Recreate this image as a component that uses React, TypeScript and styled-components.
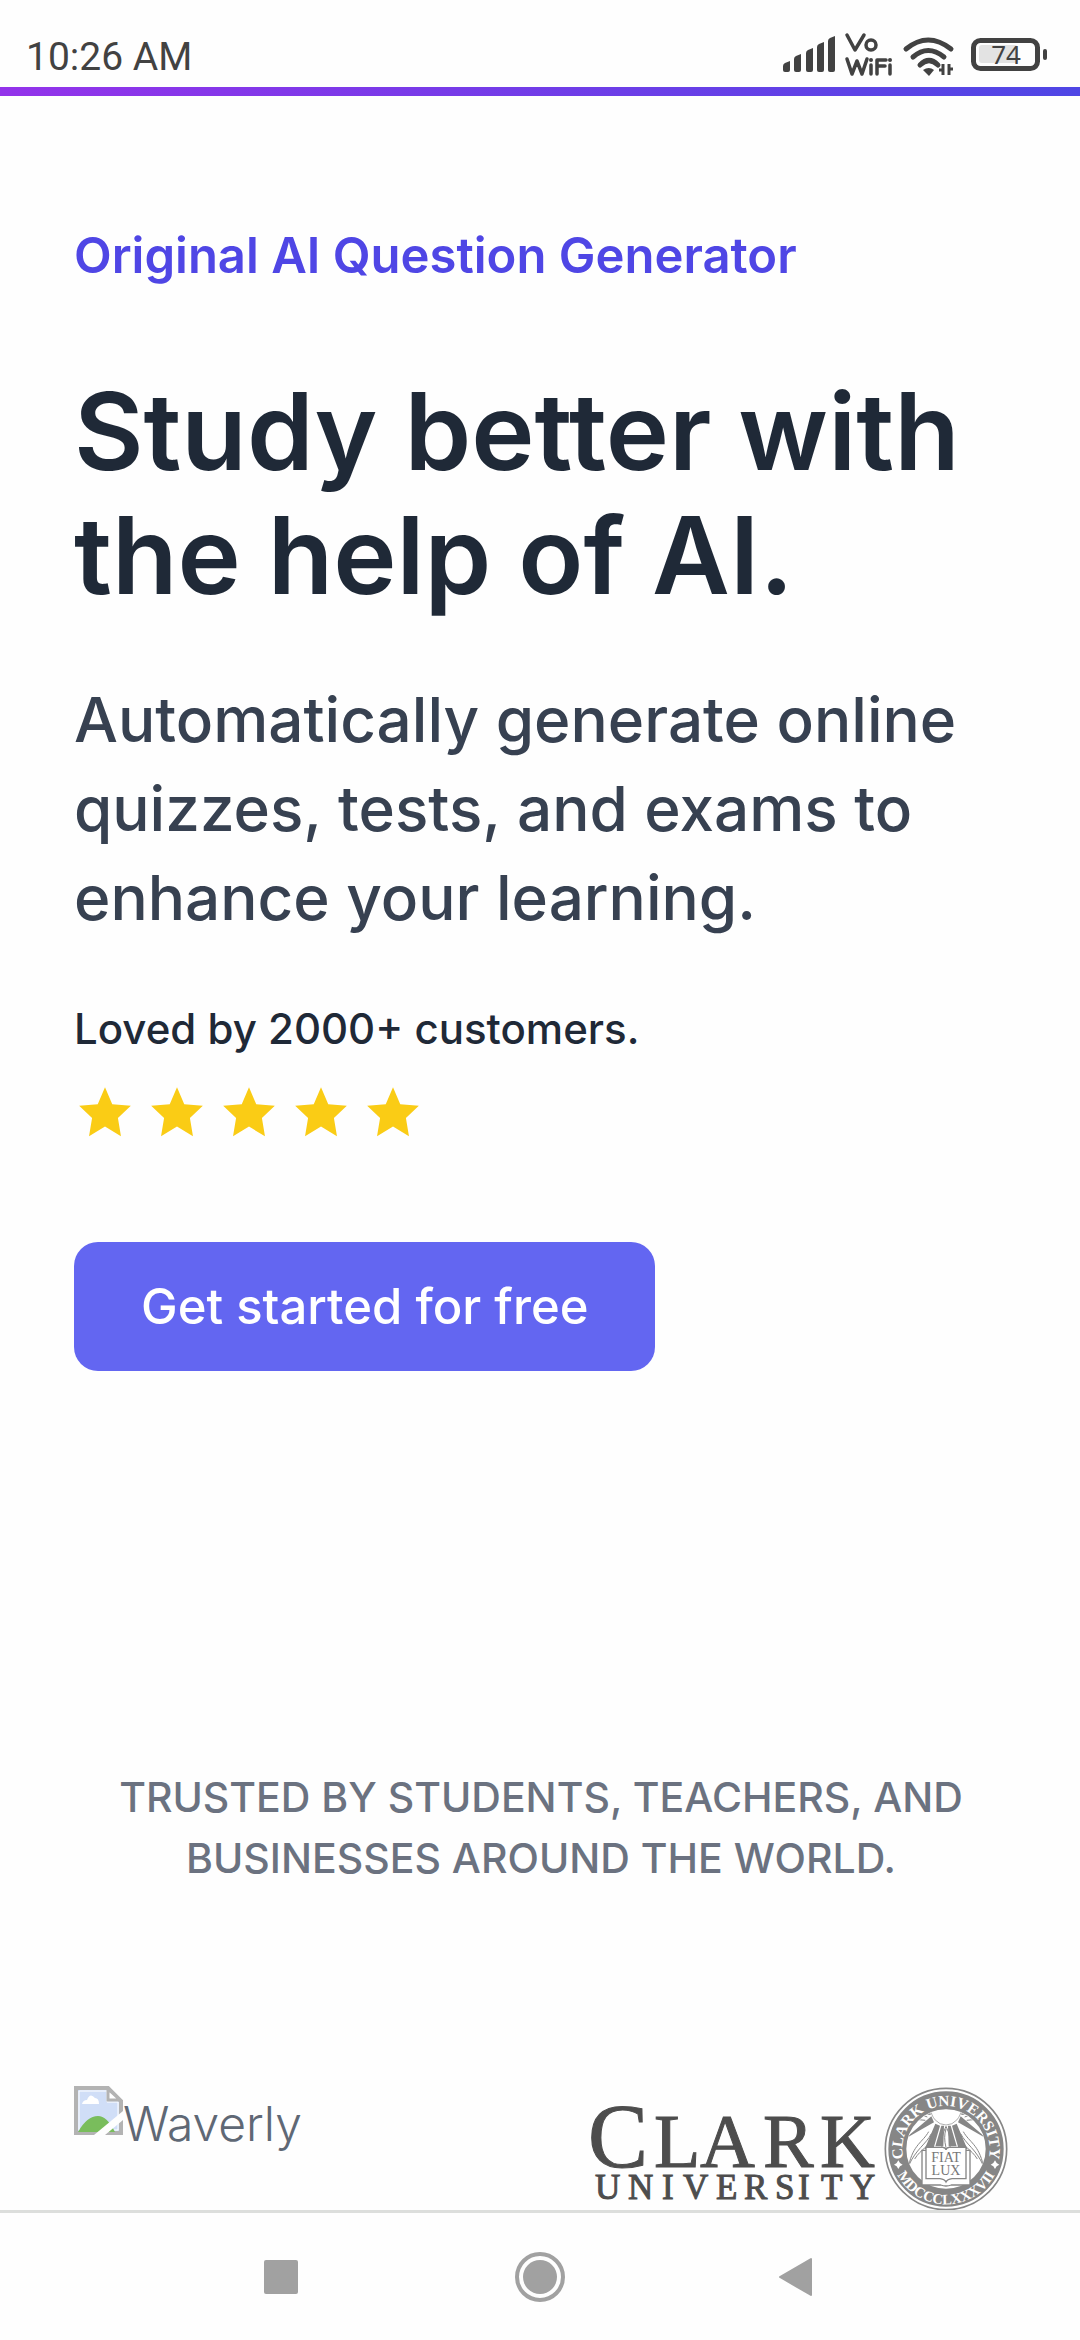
import React from "react";
import styled, { createGlobalStyle } from "styled-components";

const GlobalStyle = createGlobalStyle`
  *, *::before, *::after { box-sizing: border-box; }
  body {
    margin: 0;
    background: #fefefe;
    font-family: Inter, "Noto Sans", sans-serif;
  }
  h1, p { margin: 0; }
`;

const Screen = styled.div`
  display: flex;
  flex-direction: column;
  height: 100vh;
  overflow: hidden;
`;

const StatusBar = styled.header`
  display: flex;
  align-items: flex-end;
  justify-content: space-between;
  flex: none;
  height: 87px;
  padding: 0 31px 8px 26px;
  color: #424242;
  font-family: Roboto, sans-serif;
`;

const Clock = styled.time`
  font-size: 39px;
  line-height: 44px;
`;

const StatusIcons = styled.svg`
  display: block;
  width: 266px;
  height: 54px;
`;

const Accent = styled.div`
  flex: none;
  height: 9px;
  background: linear-gradient(90deg, #9333ea, #4f46e5);
`;

const Page = styled.main`
  flex: 1;
  min-height: 0;
  overflow: hidden;
  padding: 124px 72px 0 74px;
`;

const Hero = styled.section`
  display: flex;
  flex-direction: column;
  align-items: flex-start;
`;

const Eyebrow = styled.p`
  color: #4f46e5;
  font-size: 49px;
  font-weight: 600;
  line-height: 72px;
`;

const Title = styled.h1`
  margin-top: 77px;
  color: #1f2937;
  font-size: 107px;
  font-weight: 600;
  line-height: 124px;
`;

const Lead = styled.p`
  margin-top: 58px;
  color: #374151;
  font-size: 62px;
  font-weight: 500;
  line-height: 89px;
`;

const Loved = styled.p`
  margin-top: 57px;
  color: #1f2937;
  font-size: 42px;
  font-weight: 500;
  line-height: 60px;
`;

const Stars = styled.div`
  display: flex;
  gap: 10px;
  margin-top: 23px;
`;

const StarIcon = styled.svg`
  display: block;
  width: 62px;
  height: 62px;
  fill: #facc15;
`;

const StartButton = styled.button`
  margin-top: 98px;
  padding: 0 67px;
  height: 129px;
  border: 0;
  border-radius: 24px;
  background: #6366f1;
  color: #fff;
  font-family: inherit;
  font-size: 49px;
  font-weight: 500;
`;

const Trusted = styled.p`
  margin-top: 396px;
  color: #6b7280;
  font-size: 41px;
  font-weight: 500;
  line-height: 61px;
  text-align: center;
`;

const Logos = styled.section`
  display: flex;
  justify-content: space-between;
  align-items: flex-start;
  margin-top: 197px;
`;

const MissingLogo = styled.div`
  display: flex;
  color: #5f6875;
  font-size: 48px;
  font-weight: 300;
  line-height: 76px;
`;

const MissingIcon = styled.svg`
  display: block;
  width: 49px;
  height: 49px;
`;

const University = styled.div`
  display: flex;
  gap: 8px;
`;

const Wordmark = styled.svg`
  display: block;
  width: 288px;
  height: 126px;
  fill: #4d4d4d;
  stroke: #4d4d4d;
  stroke-width: 1;
  font-family: "Liberation Serif", serif;
`;

const Seal = styled.svg`
  display: block;
  width: 124px;
  height: 126px;
  font-family: "Liberation Serif", serif;
`;

const NavBar = styled.nav`
  display: flex;
  flex: none;
  align-items: center;
  justify-content: center;
  gap: 209px;
  height: 130px;
  border-top: 3px solid #dcdedc;
  background: #fefefe;
`;

const NavButton = styled.button`
  display: block;
  width: 50px;
  height: 50px;
  padding: 0;
  border: 0;
  background: none;
`;

const NavIcon = styled.svg`
  display: block;
  width: 50px;
  height: 50px;
  fill: #a1a1a1;
`;

function DeviceStatus() {
  return (
    <StatusIcons viewBox="0 0 266 54" role="img" aria-label="Signal, VoWiFi, Wi-Fi, battery 74">
      <g fill="#424242">
        <path d="M0 41q0-2 2-3l5-2v9q0 2-2 2H2q-2 0-2-2z" />
        <path d="M11 34q0-2 2-3l5-2v16q0 2-2 2h-3q-2 0-2-2z" />
        <path d="M23 28q0-2 2-3l5-2v22q0 2-2 2h-3q-2 0-2-2z" />
        <path d="M34 22q0-2 2-3l5-2v28q0 2-2 2h-3q-2 0-2-2z" />
        <path d="M45 16q0-2 2-3l5-2v34q0 2-2 2h-3q-2 0-2-2z" />
      </g>
      <g fill="none" stroke="#424242" strokeWidth="3.500" strokeLinecap="round" strokeLinejoin="round">
        <path d="M64 10l8 15 9-15" />
        <circle cx="88" cy="20" r="5" />
        <path d="M64 34l5 15 5-13 5 13 5-15M88 40v9M94 49V35h9M94 41h8M107 40v9" />
      </g>
      <g fill="#424242">
        <circle cx="88" cy="35" r="2" />
        <circle cx="107" cy="35" r="2" />
      </g>
      <g fill="none" stroke="#424242" strokeWidth="5" strokeLinecap="round">
        <path d="M123 24q22-18 45 0" />
        <path d="M130 32q15-13 31 0" />
        <path d="M137 40q9-9 18 0" />
      </g>
      <path d="M140 45q6-4 11 0l-5 6z" fill="#424242" />
      <path d="M156 45h4V39M160 50V39M166 50V39M170 44h-4" fill="none" stroke="#424242" strokeWidth="3" />
      <rect x="190.500" y="15.500" width="64" height="28" rx="7" fill="none" stroke="#424242" strokeWidth="5" />
      <rect x="196" y="20" width="39" height="18" rx="3" fill="#e3e3e3" />
      <rect x="260" y="24" width="4" height="11" rx="2" fill="#424242" />
      <text x="223" y="39" fill="#424242" fontFamily="Noto Sans, sans-serif" fontSize="26" textAnchor="middle">
        74
      </text>
    </StatusIcons>
  );
}

function BrokenImage() {
  return (
    <MissingIcon viewBox="0 0 49 49" aria-hidden="true">
      <path d="M2 2h32l13 13v32H2z" fill="#d0def7" stroke="#b3b3b3" strokeWidth="4" />
      <path d="M5 5h28v11h11v28H5z" fill="none" stroke="#fff" strokeWidth="1" />
      <path d="M8 18q1-4 5-4 3-8 8-2 4 0 4 6z" fill="#fff" />
      <path d="M4 46q9-16 20-16 9 0 17 16z" fill="#79bd5c" />
      <path d="M20 49L49 25v9L31 49z" fill="#fefefe" />
      <path d="M34 3v11h12z" fill="#fff" stroke="#b3b3b3" strokeWidth="3" />
      <path d="M36 0l13 13V0z" fill="#fefefe" />
    </MissingIcon>
  );
}

function UniversitySeal() {
  return (
    <Seal viewBox="-186 -189 372 378" role="img" aria-label="Clark University seal">
      <defs>
        <path id="sealTop" d="M-130 18A131 131 0 1 1 130 18" />
        <path id="sealBottom" d="M-147 76A165 165 0 0 0 147 76" />
        <clipPath id="sealCore">
          <circle r="118" />
        </clipPath>
      </defs>
      <circle r="182" fill="#fff" stroke="#868686" strokeWidth="5" />
      <circle r="146" fill="none" stroke="#868686" strokeWidth="54" />
      <g fill="#fff" fontSize="46" fontWeight="700">
        <text textAnchor="middle">
          <textPath href="#sealTop" startOffset="50%">CLARK UNIVERSITY</textPath>
        </text>
        <text textAnchor="middle" fontSize="44">
          <textPath href="#sealBottom" startOffset="50%">MDCCCLXXXVII</textPath>
        </text>
        <path d="M-143 34l5 8 8 5-8 5-5 8-5-8-8-5 8-5zM147 34l5 8 8 5-8 5-5 8-5-8-8-5 8-5z" />
      </g>
      <g clipPath="url(#sealCore)">
        <g fill="#868686">
          <path d="M-48-122l-54 14 56 6zM48-122l54 14-56 6z" />
          <path d="M-44-98L-124-30l88-50zM44-98l80 68-88-50z" />
          <path d="M-32-76L-64 0h26l20-70zM32-76L64 0H38L18-70zM-14-70L-32-8h24l2-62zM14-70l18 62H8L6-70z" />
        </g>
        <g fill="none" stroke="#868686" strokeWidth="3">
          <path d="M-52-52C-70-20-98-14-112 50M-44-46C-60-14-90 0-112 50M-40-36C-48-8-76 0-94 30" />
          <path d="M52-52C70-20 98-14 112 50M44-46C60-14 90 0 112 50M40-36C48-8 76 0 94 30" />
          <path d="M0-68q-16 32-12 66M0-68q16 32 12 66M0-60q-8 24 0 56" />
          <path d="M-56-96q-24-14-46 10 20-4 40 0M56-96q24-14 46 10-20-4-40 0" />
        </g>
        <path d="M-46-124a46 52 0 0 0 92 0z" fill="#fff" stroke="#868686" strokeWidth="2" />
      </g>
      <g fill="#fff" stroke="#868686" strokeWidth="4">
        <path d="M-72 4h144v104H16q-16 6-32 0h-56z" />
        <path d="M-60-5h50q10 1 10 8 0-7 10-8h50v94H18q-14 2-18 10-4-8-18-10h-42z" />
      </g>
      <g fill="#777" fontSize="42" textAnchor="middle">
        <text y="40">FIAT</text>
        <text y="78">LUX</text>
      </g>
    </Seal>
  );
}

const STAR_COUNT = 5;

export default function App() {
  return (
    <Screen>
      <GlobalStyle />
      <StatusBar>
        <Clock>10:26 AM</Clock>
        <DeviceStatus />
      </StatusBar>
      <Accent />
      <Page>
        <Hero>
          <Eyebrow>Original AI Question Generator</Eyebrow>
          <Title>Study better with the help of AI.</Title>
          <Lead>Automatically generate online quizzes, tests, and exams to enhance your learning.</Lead>
          <Loved>Loved by 2000+ customers.</Loved>
          <Stars role="img" aria-label="5 stars">
            {Array.from({ length: STAR_COUNT }, (_, i) => (
              <StarIcon key={i} viewBox="0 0 24 24">
                <path d="M12 17.270L18.180 21l-1.180-7.030L22 9.240l-7.190-.610L12 2 9.190 8.630 2 9.240l5 4.730L5.820 21z" />
              </StarIcon>
            ))}
          </Stars>
          <StartButton type="button">Get started for free</StartButton>
        </Hero>
        <Trusted>TRUSTED BY STUDENTS, TEACHERS, AND BUSINESSES AROUND THE WORLD.</Trusted>
        <Logos>
          <MissingLogo>
            <BrokenImage />
            Waverly
          </MissingLogo>
          <University>
            <Wordmark viewBox="0 0 288 126" role="img" aria-label="Clark University">
              <text y="81" fontSize="90" x="0">C</text>
              <text y="81" fontSize="76" x="66 112 175 232">LARK</text>
              <text y="113" fontSize="35" x="7 40 74 95 128 156 187 210 233 262">UNIVERSITY</text>
            </Wordmark>
            <UniversitySeal />
          </University>
        </Logos>
      </Page>
      <NavBar>
        <NavButton type="button" aria-label="Recent apps">
          <NavIcon viewBox="0 0 50 50">
            <rect x="8" y="8" width="34" height="34" rx="2" />
          </NavIcon>
        </NavButton>
        <NavButton type="button" aria-label="Home">
          <NavIcon viewBox="0 0 50 50">
            <circle cx="25" cy="25" r="17" />
            <circle cx="25" cy="25" r="23" fill="none" stroke="#a1a1a1" strokeWidth="4" />
          </NavIcon>
        </NavButton>
        <NavButton type="button" aria-label="Back">
          <NavIcon viewBox="0 0 50 50">
            <path d="M6 25L37 7v36z" stroke="#a1a1a1" strokeWidth="2" strokeLinejoin="round" />
          </NavIcon>
        </NavButton>
      </NavBar>
    </Screen>
  );
}
